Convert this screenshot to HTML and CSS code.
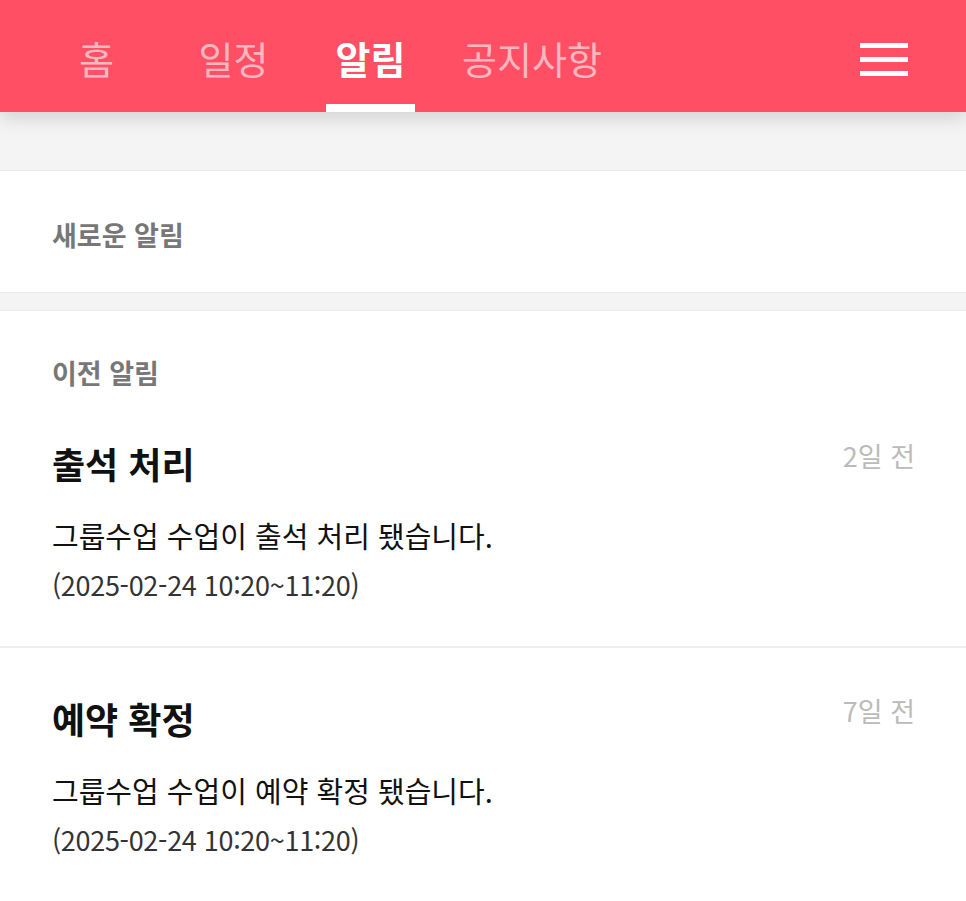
FILE: index.html
```html
<!DOCTYPE html>
<html lang="ko">
<head>
<meta charset="utf-8">
<title>알림</title>
<link rel="stylesheet" href="styles.css">
</head>
<body>
<header class="topbar">
  <nav class="tabs">
    <a class="tab"><span class="tab-label">홈</span></a>
    <a class="tab"><span class="tab-label">일정</span></a>
    <a class="tab tab-active"><span class="tab-label">알림</span></a>
    <a class="tab"><span class="tab-label">공지사항</span></a>
  </nav>
  <button class="menu-btn" aria-label="메뉴">
    <span class="menu-line"></span>
    <span class="menu-line"></span>
    <span class="menu-line"></span>
  </button>
</header>
<main class="content">
  <section class="card card-new">
    <h2 class="section-label">새로운 알림</h2>
  </section>
  <section class="card card-old">
    <h2 class="section-label">이전 알림</h2>
    <article class="item">
      <div class="item-head">
        <h3 class="item-title">출석 처리</h3>
        <span class="item-time">2일 전</span>
      </div>
      <p class="item-body">그룹수업 수업이 출석 처리 됐습니다.</p>
      <p class="item-date">(2025-02-24 10:20~11:20)</p>
    </article>
    <article class="item">
      <div class="item-head">
        <h3 class="item-title">예약 확정</h3>
        <span class="item-time">7일 전</span>
      </div>
      <p class="item-body">그룹수업 수업이 예약 확정 됐습니다.</p>
      <p class="item-date">(2025-02-24 10:20~11:20)</p>
    </article>
  </section>
</main>
</body>
</html>
```
FILE: styles.css
```css
* { box-sizing: border-box; }
html, body { margin: 0; padding: 0; }
body {
  font-family: "Noto Sans CJK KR", "Noto Sans", sans-serif;
  background: #f4f4f4;
  width: 966px;
  height: 901px;
  overflow: hidden;
}
.topbar {
  position: relative;
  z-index: 2;
  height: 112px;
  background: #fe4f65;
  display: flex;
  align-items: stretch;
  box-shadow: 0 6px 18px rgba(0,0,0,0.14);
}
.tabs {
  display: flex;
  padding-left: 28px;
}
.tab {
  min-width: 137px;
  padding: 3px 23px 0;
  display: flex;
  align-items: center;
  justify-content: center;
  font-size: 38px;
  color: rgba(255,255,255,0.6);
}
.tab-label { position: relative; height: 100%; display: flex; align-items: center; }
.tab-active { color: #fff; font-weight: 700; }
.tab-active .tab-label::after {
  content: "";
  position: absolute;
  left: -10px;
  right: -10px;
  bottom: 0;
  height: 8px;
  background: #fff;
}
.menu-btn {
  margin-left: auto;
  margin-right: 58px;
  background: none;
  border: 0;
  width: 48px;
  display: flex;
  flex-direction: column;
  justify-content: center;
  gap: 9px;
  padding: 7px 0 0;
}
.menu-line {
  display: block;
  width: 48px;
  height: 5px;
  background: #fff;
}
.content { padding-top: 58px; }
.card {
  background: #fff;
  border-top: 1px solid #ebebeb;
  border-bottom: 1px solid #ebebeb;
}
.card-new { padding: 49px 52px 42px; margin-bottom: 17px; }
.card-old { padding: 47px 0 0; }
.section-label {
  margin: 0;
  font-size: 27px;
  line-height: 30px;
  font-weight: 700;
  color: #777;
}
.card-old .section-label { padding: 0 52px; margin-bottom: 5px; }
.item {
  padding: 48px 51px 41px 52px;
  border-bottom: 2px solid #eeeeee;
}
.item:last-child { border-bottom: 0; }
.item-head {
  display: flex;
  justify-content: space-between;
  align-items: flex-start;
}
.item-title {
  margin: 0;
  font-size: 36px;
  line-height: 44px;
  font-weight: 700;
  color: #111;
}
.item-time {
  font-size: 27px;
  line-height: 30px;
  color: #bbb;
}
.item-body {
  margin: 30px 0 0;
  font-size: 29px;
  line-height: 40px;
  color: #111;
}
.item-date {
  margin: 10px 0 0;
  font-size: 27px;
  line-height: 40px;
  color: #333;
  letter-spacing: -0.3px;
}
```
